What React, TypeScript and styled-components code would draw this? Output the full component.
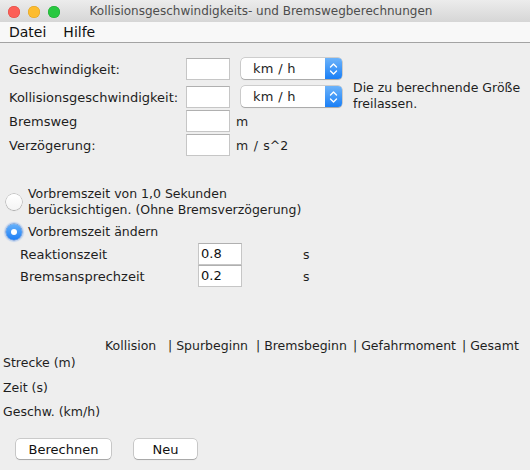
import styled, { createGlobalStyle } from "styled-components";

const GlobalStyle = createGlobalStyle`
  html, body {
    margin: 0;
    padding: 0;
    background: #eeeeee;
  }

  body {
    font-family: "DejaVu Sans", "Liberation Sans", sans-serif;
    font-size: 12.5px;
    color: #1e1e1e;
  }
`;

const formRows = [
  { label: "Geschwindigkeit:", unit: "select" },
  { label: "Kollisionsgeschwindigkeit:", unit: "select" },
  { label: "Bremsweg", unit: "m" },
  { label: "Verzögerung:", unit: "m / s^2" },
];

const headerCells = ["Kollision", "| Spurbeginn", "| Bremsbeginn", "| Gefahrmoment", "| Gesamt"];

const ChevronIcon = () => (
  <svg width="9" height="14" viewBox="0 0 9 14" aria-hidden="true">
    <path d="M1.5 5 L4.5 2 L7.5 5" fill="none" stroke="#fff" strokeWidth="1.4" strokeLinecap="round" strokeLinejoin="round" />
    <path d="M1.5 9 L4.5 12 L7.5 9" fill="none" stroke="#fff" strokeWidth="1.4" strokeLinecap="round" strokeLinejoin="round" />
  </svg>
);

const App = () => {
  return (
    <>
      <GlobalStyle />
      <Window>
        <TitleBar>
          <Lights>
            <Light $fill="#fc5f57" $edge="#de4a42" />
            <Light $fill="#fdbc2e" $edge="#dea022" />
            <Light $fill="#28c840" $edge="#1ea832" />
          </Lights>
          <Title>Kollisionsgeschwindigkeits- und Bremswegberechnungen</Title>
          <span />
        </TitleBar>

        <MenuBar>
          <MenuItem>Datei</MenuItem>
          <MenuItem>Hilfe</MenuItem>
        </MenuBar>

        <Content>
          <FormGrid>
            {formRows.map((row) => (
              <FormRow key={row.label}>
                <Label>{row.label}</Label>
                <TextField />
                {row.unit === "select" ? (
                  <Select>
                    <SelectText>km / h</SelectText>
                    <SelectArrow>
                      <ChevronIcon />
                    </SelectArrow>
                  </Select>
                ) : (
                  <Unit $shift={-5}>{row.unit}</Unit>
                )}
              </FormRow>
            ))}
            <Note>
              Die zu berechnende Größe
              <br />
              freilassen.
            </Note>
          </FormGrid>

          <RadioGroup>
            <RadioOption>
              <Radio />
              <RadioText>
                Vorbremszeit von 1,0 Sekunden
                <br />
                berücksichtigen. (Ohne Bremsverzögerung)
              </RadioText>
            </RadioOption>
            <RadioOption>
              <Radio $checked />
              <RadioText>Vorbremszeit ändern</RadioText>
            </RadioOption>
          </RadioGroup>

          <DelayGrid>
            <Label>Reaktionszeit</Label>
            <TextField as="div">0.8</TextField>
            <Unit>s</Unit>
            <Label>Bremsansprechzeit</Label>
            <TextField as="div">0.2</TextField>
            <Unit>s</Unit>
          </DelayGrid>

          <ResultTable>
            <TableHeader>
              {headerCells.map((cell) => (
                <HeaderCell key={cell}>{cell}</HeaderCell>
              ))}
            </TableHeader>
            <TableRows>
              <RowLabel>Strecke (m)</RowLabel>
              <RowLabel>Zeit (s)</RowLabel>
              <RowLabel>Geschw. (km/h)</RowLabel>
            </TableRows>
          </ResultTable>

          <ButtonRow>
            <PushButton $width={95}>Berechnen</PushButton>
            <PushButton $width={63}>Neu</PushButton>
          </ButtonRow>
        </Content>
      </Window>
    </>
  );
};

const Window = styled.div`
  width: 530px;
  height: 470px;
  overflow: hidden;
  background: #eeeeee;
`;

const TitleBar = styled.div`
  height: 22px;
  display: grid;
  grid-template-columns: 70px 1fr 78px;
  align-items: center;
  background: linear-gradient(#ececec, #d6d6d6);
`;

const Lights = styled.div`
  display: flex;
  gap: 8px;
  padding-left: 8px;
  padding-top: 1px;
`;

const Light = styled.span<{ $fill: string; $edge: string }>`
  width: 12px;
  height: 12px;
  border-radius: 50%;
  background: ${(p) => p.$fill};
  box-shadow: inset 0 0 0 0.5px ${(p) => p.$edge};
`;

const Title = styled.div`
  text-align: center;
  color: #4d4d4d;
  font-size: 12px;
  white-space: nowrap;
`;

const MenuBar = styled.div`
  height: 20px;
  display: flex;
  align-items: center;
  gap: 17px;
  padding-left: 9px;
  background: #f8f8f8;
  border-bottom: 1px solid #a3a3a3;
  font-size: 14px;
  color: #111;
`;

const MenuItem = styled.span`
  line-height: 20px;
`;

const Content = styled.div`
  display: flex;
  flex-direction: column;
  padding-top: 15px;
`;

const FormGrid = styled.div`
  display: grid;
  grid-template-columns: 177px 55px 112px 1fr;
  grid-template-rows: 28px 24px 24px 22px;
  padding-left: 9px;
`;

const FormRow = styled.div`
  display: contents;
`;

const Label = styled.div`
  height: 22px;
  line-height: 23px;
  font-size: 13px;
  white-space: nowrap;
`;

const TextField = styled.input`
  box-sizing: border-box;
  width: 44px;
  height: 22px;
  margin: 0;
  padding: 0 2px;
  border: 1px solid #c6c6c6;
  border-top-color: #b0b0b0;
  background: #fff;
  font: inherit;
  font-size: 13px;
  line-height: 20px;
  color: #111;
`;

const Select = styled.div`
  width: 101px;
  height: 21px;
  display: flex;
  align-items: center;
  border-radius: 4px;
  background: #fff;
  box-shadow: 0 0 0 0.5px rgba(0, 0, 0, 0.28), 0 1px 1px rgba(0, 0, 0, 0.18);
`;

const SelectText = styled.span`
  flex: 1;
  padding-left: 12px;
  font-size: 13px;
  letter-spacing: 0.3px;
  white-space: pre;
`;

const SelectArrow = styled.span`
  width: 17px;
  height: 21px;
  display: flex;
  align-items: center;
  justify-content: center;
  border-radius: 0 4px 4px 0;
  background: linear-gradient(#6cb3fa, #1a7ff6);
`;

const Unit = styled.div<{ $shift?: number }>`
  height: 22px;
  margin-left: ${(p) => p.$shift ?? 0}px;
  line-height: 23px;
  word-spacing: 1.5px;
  white-space: pre;
`;

const Note = styled.div`
  grid-column: 4;
  grid-row: 1 / span 3;
  align-self: center;
  line-height: 16px;
  white-space: nowrap;
`;

const RadioGroup = styled.div`
  display: flex;
  flex-direction: column;
  gap: 6px;
  margin-top: 30px;
  padding-left: 6px;
`;

const RadioOption = styled.div`
  display: flex;
  align-items: center;
  gap: 6px;
`;

const Radio = styled.span<{ $checked?: boolean }>`
  box-sizing: border-box;
  width: 16px;
  height: 16px;
  border-radius: 50%;
  display: flex;
  align-items: center;
  justify-content: center;
  background: ${(p) => (p.$checked ? "linear-gradient(#66b1fa, #1d7ef5)" : "linear-gradient(#ffffff, #f4f4f4)")};
  box-shadow: ${(p) =>
    p.$checked
      ? "0 0 0 0.5px rgba(0, 60, 160, 0.5), 0 0 1px 2px rgba(120, 170, 240, 0.4)"
      : "0 0 0 0.5px rgba(0, 0, 0, 0.35), 0 1px 1px rgba(0, 0, 0, 0.15)"};

  &::after {
    content: "";
    display: ${(p) => (p.$checked ? "block" : "none")};
    width: 6px;
    height: 6px;
    border-radius: 50%;
    background: #fff;
  }
`;

const RadioText = styled.div`
  line-height: 16px;
`;

const DelayGrid = styled.div`
  display: grid;
  grid-template-columns: 178px 105px 1fr;
  grid-template-rows: 22px 22px;
  margin-top: 3px;
  padding-left: 20px;
`;

const ResultTable = styled.div`
  display: flex;
  flex-direction: column;
  margin-top: 51px;
  padding-left: 3px;
`;

const TableHeader = styled.div`
  display: grid;
  grid-template-columns: 63px 88px 97px 109px auto;
  padding-left: 102px;
  line-height: 16px;
`;

const HeaderCell = styled.span`
  white-space: pre;
`;

const TableRows = styled.div`
  display: flex;
  flex-direction: column;
  gap: 8.5px;
  padding-top: 1px;
`;

const RowLabel = styled.div`
  line-height: 16px;
`;

const ButtonRow = styled.div`
  display: flex;
  gap: 23px;
  margin-top: 19px;
  padding-left: 16px;
`;

const PushButton = styled.button<{ $width: number }>`
  width: ${(p) => p.$width}px;
  height: 20px;
  padding: 0;
  border: none;
  border-radius: 4px;
  background: #fff;
  box-shadow: 0 0 0 0.5px rgba(0, 0, 0, 0.3), 0 1px 1px rgba(0, 0, 0, 0.18);
  font-family: inherit;
  font-size: 13px;
  color: #111;
`;

export default App;
